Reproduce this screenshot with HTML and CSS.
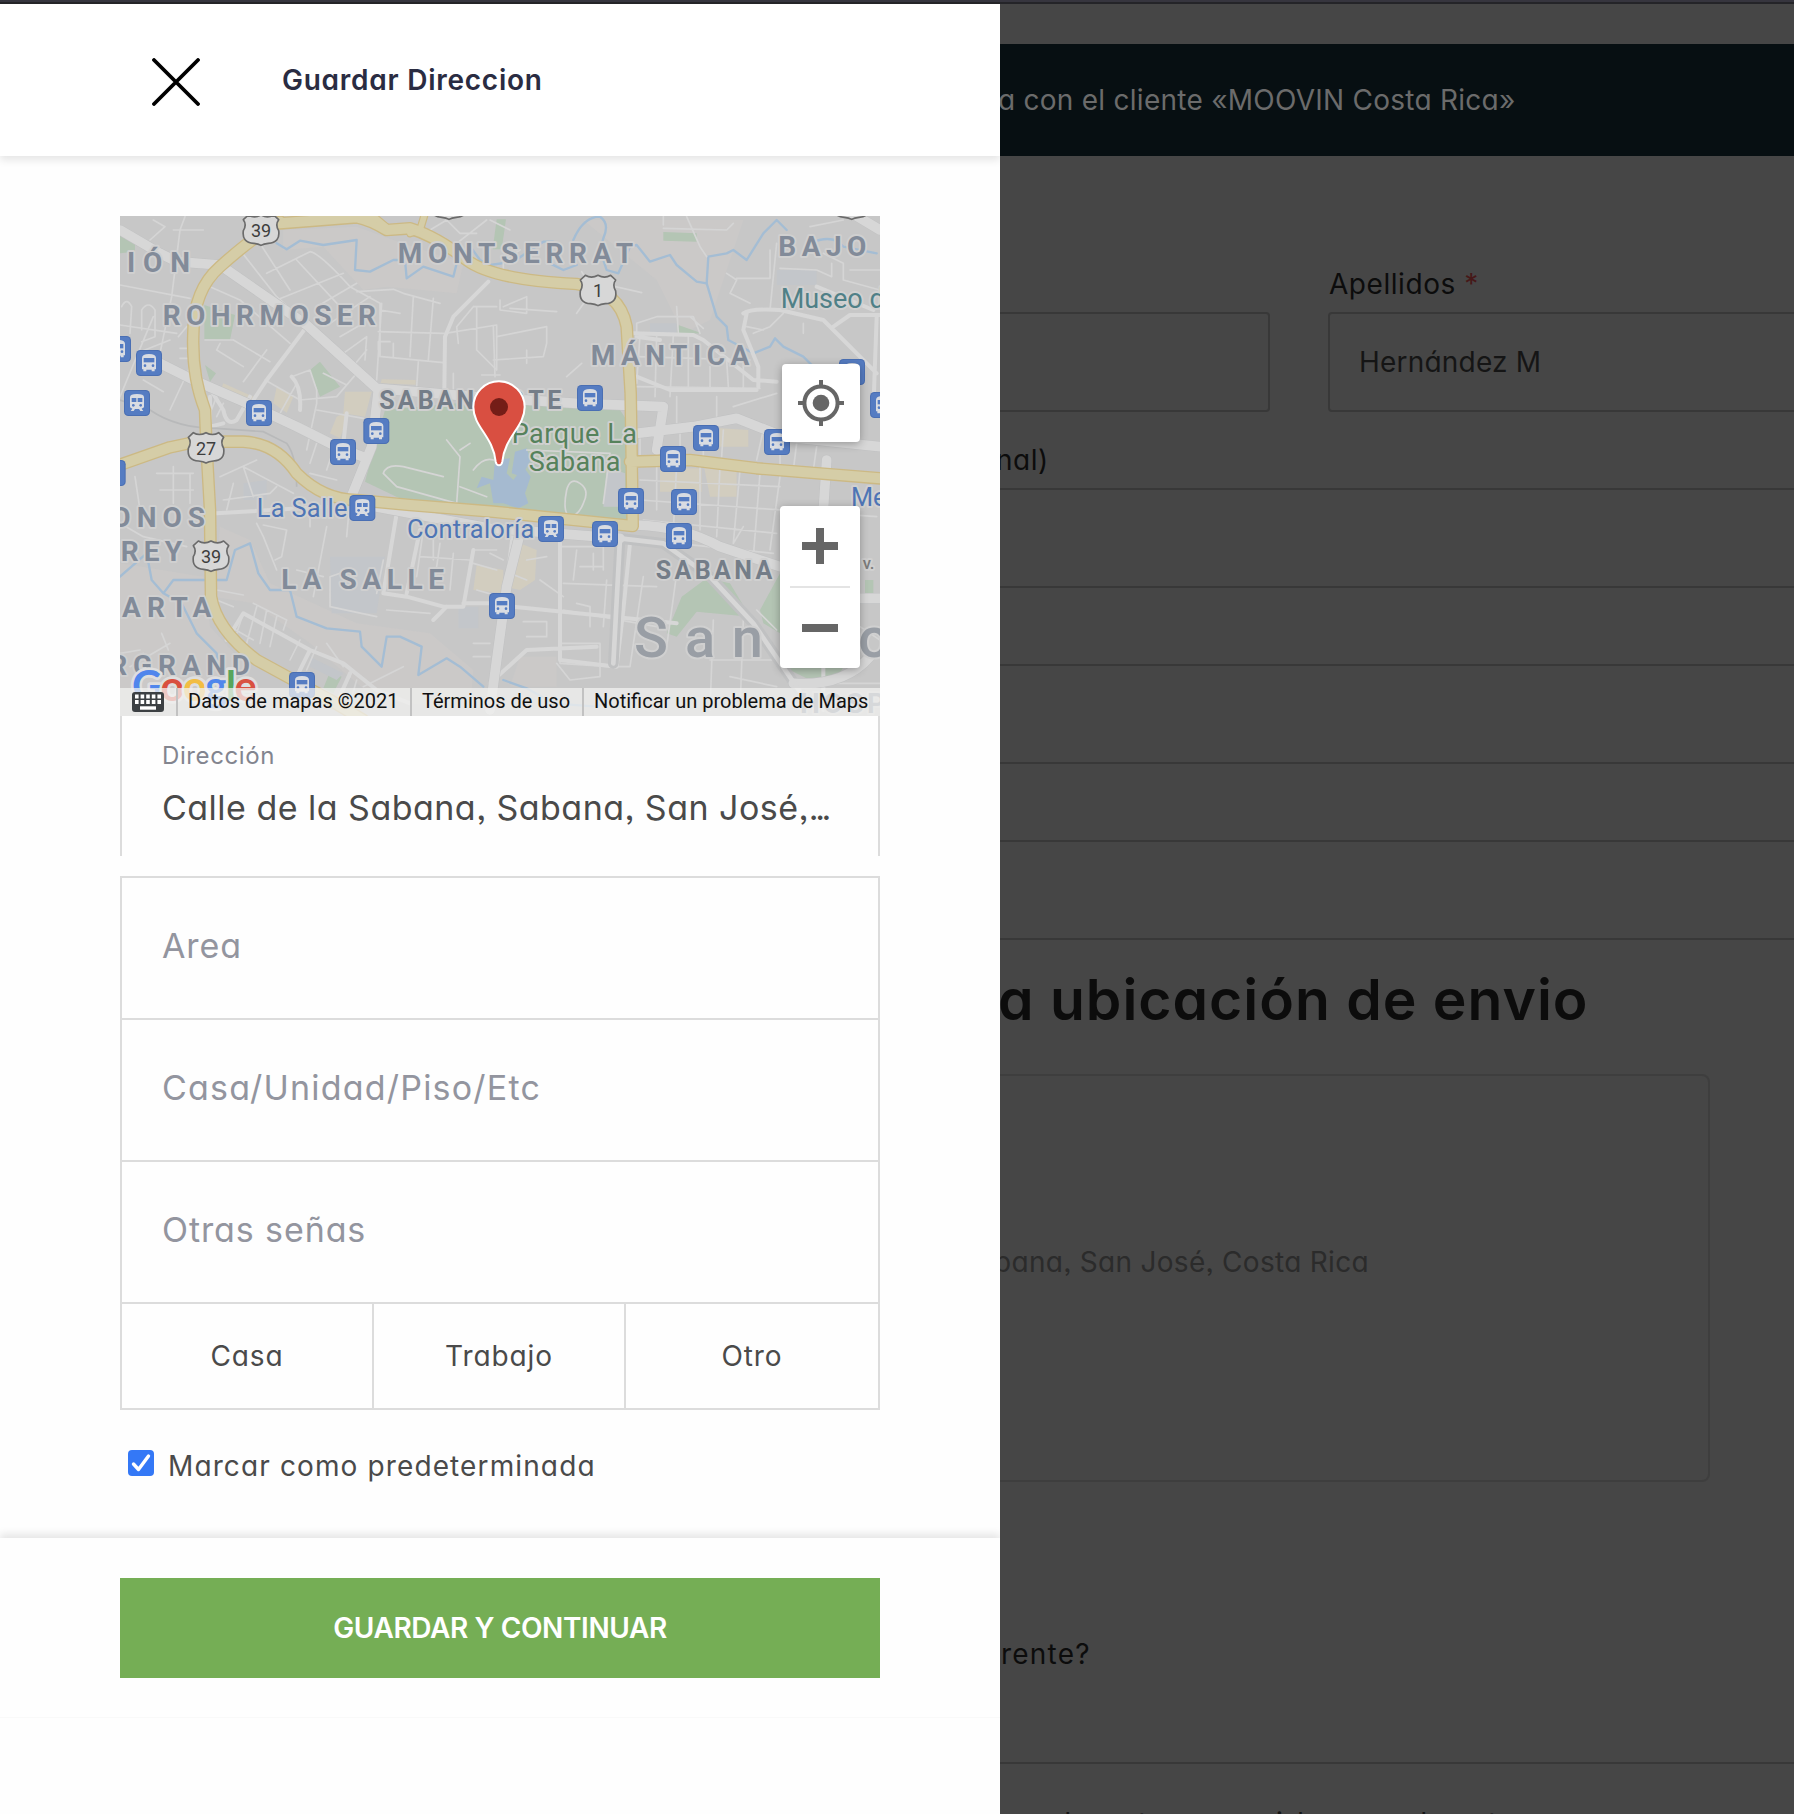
FILE: index.html
```html
<!DOCTYPE html>
<html lang="es">
<head>
<meta charset="utf-8">
<title>Guardar Direccion</title>
<link rel="stylesheet" href="styles.css">
</head>
<body>
<div class="topline"></div>
<div class="shell">
<aside class="drawer">
  <header class="head">
    <svg class="close" viewBox="0 0 48 48"><path d="M2 2L46 46M46 2L2 46" stroke="#000" stroke-width="3.8" stroke-linecap="round"/></svg>
    <h1 class="title">Guardar Direccion</h1>
  </header>
  <div class="body">
    <div class="map">
      <svg class="canvas" viewBox="30 18 2280 1500">
        <defs>
          <g id="bus"><rect width="78" height="78" rx="13" fill="#4a6fb3"/><rect x="3" y="3" width="72" height="72" rx="11" fill="#557cc2"/><path fill="#d9dce2" d="M18 24q0-12 21-12t21 12v34h-4v6h-9v-5H31v5h-9v-6h-4z"/><path fill="#557cc2" d="M23 24h32v13H23z"/><circle cx="27" cy="47" r="4" fill="#557cc2"/><circle cx="51" cy="47" r="4" fill="#557cc2"/></g>
          <g id="train"><rect width="78" height="78" rx="13" fill="#4a6fb3"/><rect x="3" y="3" width="72" height="72" rx="11" fill="#557cc2"/><path fill="#d9dce2" d="M18 22q0-10 21-10t21 10v30l-7 4 5 7h-9l-4-6H33l-4 6h-9l5-7-7-4z"/><path fill="#557cc2" d="M23 24h14v12H23zM41 24h14v12H41z"/><circle cx="28" cy="46" r="4" fill="#557cc2"/><circle cx="50" cy="46" r="4" fill="#557cc2"/></g>
          <path id="shield" d="M-38 -45Q-20 -34 0 -45Q20 -34 38 -45L53 -31Q42 -16 53 2Q58 38 22 40Q8 41 0 46Q-8 41 -22 40Q-58 38 -53 2Q-42 -16 -53 -31Z" fill="#d7d7d7" stroke="#6b6b6b" stroke-width="5" stroke-linejoin="round"/>
        </defs>
        <rect x="30" y="18" width="2280" height="1500" fill="#c7c7c7"/>
        <path fill="#cbc9c8" d="M520 60L740 50 850 90 1060 160 1040 250 830 230 760 240 640 110 520 120ZM1420 30H1900L1800 330 1720 370 1640 210ZM330 950L420 990 480 1120 740 1240 960 1270 1090 1380 1080 1500 800 1470 600 1300 430 1180 310 1160ZM30 1060L280 1100 300 1250 420 1380 400 1500H30ZM1230 1340H1340V1430H1200Z"/>
        <g fill="#b4c5b4">
          <path d="M825 600L1090 575 1380 590 1530 600 1550 630 1560 945 1140 905 900 880 765 815 785 740Z"/>
          <path d="M30 62L75 92V125L30 130ZM283 285L375 315 360 390 283 388ZM600 480L630 455 690 530 630 560ZM285 465L318 490 300 515ZM1160 28H1188L1175 118H1148ZM1660 66L1760 70V95L1660 92ZM1705 345L1775 370 1700 372ZM1715 1160L1790 1105 1860 1120 1920 1220 1760 1205 1700 1280 1670 1270ZM1950 1200L2010 1090V1270L1960 1240ZM660 1385L695 1400 670 1450 640 1435ZM2265 1110H2290V1150H2265ZM2020 1370H2200L2180 1410 2100 1410Z"/>
        </g>
        <g fill="#d2cdbf">
          <path d="M340 520L430 560 425 575 335 532ZM815 508L917 510V524L812 520ZM500 530L550 560 530 608 490 580ZM705 545H785L765 620 700 610ZM680 620L720 600 690 685 660 670ZM1230 1000L1280 1020 1275 1110 1230 1140 1180 1130ZM1650 775H1775V845H1650ZM1780 760H1880V860H1800ZM1830 655L1915 660V710H1830ZM1100 1065L1180 1080V1150L1090 1140Z"/>
        </g>
        <path fill="#c3c6ca" d="M660 1040H825L800 1210H665ZM1620 340H1700V370H1620ZM2000 180H2120V225H2000ZM400 820L470 810V870H400ZM1045 1190H1105V1255H1045ZM600 1340L700 1390 680 1410 600 1370ZM1490 770L1545 790V890L1480 890Z"/>
        <path fill="#a5bad0" d="M1155 750L1200 745 1190 790 1210 810 1240 770 1262 800 1245 850 1255 880 1225 895 1180 880 1150 880 1140 820 1100 835 1115 800 1150 810ZM1215 725L1250 715 1262 750 1235 800 1205 790Z"/>
        <g class="river">
          <path d="M500 100L530 118 570 92 640 105 740 90 735 180 780 185 850 150 885 150 890 205 940 170 1030 200 1040 160M1085 115L1110 150 1140 165 1210 155 1240 135 1300 95 1330 95 1320 160 1360 180 1400 165M1390 90Q1420 20 1470 20 1500 40 1480 85L1470 120 1490 180 1525 190 1560 110 1580 105 1620 155 1680 135 1700 165 1760 215 1790 220 1795 140 1850 130 1870 120 1910 150 1960 70 2000 30 2030 60"/>
          <path d="M1790 220L1820 320 1850 350 1855 390 1930 430 1980 410 1995 385 2020 410 2080 440 2110 470M2100 100Q2170 70 2200 110L2300 130"/>
          <path d="M30 1100L110 1030 125 1110 160 1150 190 1110 350 1110 375 1020 420 1000 445 1090 480 1140 540 1140 560 1220 650 1255 750 1265 755 1310 815 1370 830 1280 870 1280 935 1310 925 1395 1010 1345 1050 1370 1120 1430M160 1150L215 1180 260 1270 320 1330 330 1400M1180 1410L1250 1435 1330 1480 1460 1490 1500 1470"/>
        </g>
        <g class="lane">
          <path d="M225 20L210 60 185 260 150 430M30 225L240 265M30 345L200 370M130 30L165 50 120 90M95 360V300Q115 270 135 300V380L95 395M35 290Q50 260 65 290L60 370M280 60L190 60M205 380L230 350M30 560L130 320M180 600L250 450M100 510L160 545M80 430L180 390M210 415H240M210 445H240"/>
          <path d="M300 230L390 270 540 400M285 390L370 390 480 455M390 120L500 260 590 340M450 100L540 240M470 190L600 125Q630 130 720 230L810 280V440M560 150L690 290M500 270L700 190M620 290L740 220M660 340L780 260M400 515L470 420M330 400L320 420 400 470M690 380L760 340M700 430L770 380 765 450M720 480L770 420M740 245L850 238 880 250 990 280M910 260L900 440M970 265L955 450M815 280L800 510M805 365L1000 370M810 300L870 310M805 420V395H840M850 400V440M815 440L1000 458M925 455L920 530M1030 490V560M1005 370L1160 345M1090 290L1040 350 1045 400M1090 290H1160M1100 290V420L1160 480V345M1115 495H1170M510 610L560 520M465 510L570 570 680 560 740 490M545 500L600 480 620 540 620 580 590 720M620 600L760 625M300 610L320 560M340 580L320 620M640 490L710 525"/>
          <path d="M960 60L1010 30 1050 70 1100 70M1140 30L1200 60M1040 100L1130 30M1180 200V150L1230 120M1415 185L1430 210 1595 248M1460 225L1400 310M1180 290L1250 260V310L1170 300V270M1200 295L1340 305M1310 350V400L1300 440 1150 450M1415 460L1370 500M1160 380L1310 350M1250 420V460M1150 350L1155 500M1730 20L1770 110 1790 140M1660 45V20M1660 55L1850 60 1870 40M1850 190L1880 210 1860 250 1920 280M1880 205H1980V120M2010 175L2120 180 2165 200V160M2100 50L2200 30M2220 180H2310M2140 130L2200 160V210L2310 240M2080 370V340M1910 350L1960 360M1930 370L1980 350 2020 310M1580 370V340L1640 320 1750 320 1770 370M1700 290L1705 370M1740 320L1780 355"/>
          <path d="M1640 375L1635 560M1690 375L1680 560M1735 375V530M1590 375L1580 520M1800 470V530M1850 450L1855 530M1900 440V540M1580 440L1920 450M1580 530L1950 535M1700 560V650M1820 560V650M1870 590L2000 550M2000 100L1980 300M1710 640V750M1780 640V740M1590 680V740M1840 660L1835 740M1960 660L1940 750M2010 710V780M2060 700L2050 780M2120 710L2110 780"/>
          <path d="M1640 760V900M1700 765L1690 960M1770 770V960M1830 770L1820 980M1890 780L1870 1000M1950 790L1930 1040M2010 800L1980 1020M1590 810L2010 830M1590 870L2300 920M1600 930L2000 970M1700 1000L1990 1030M1870 1000L1900 950"/>
          <path d="M1350 980L1350 1360M1350 1010H1480V1080M1450 1030V1080M1410 1070H1480M1400 1020L1390 1110M1360 1120L1640 1130M1360 1200L1640 1250M1490 1110L1480 1250M1700 1090L1670 1310M1350 1300H1470V1400L1380 1410 1340 1360M1350 1360L1500 1370 1560 1370 1600 1100M1240 1235H1310V1280L1250 1280M1400 1180L1440 1190V1250M1250 1050L1310 1040M1200 1090L1250 1110M1290 1110L1360 1160M1140 1030L1180 1050M1810 1230L1800 1500M1900 1230L1890 1500M1800 1350H2000M1860 1400L2000 1430M1940 1200L2000 1260"/>
          <path d="M440 940L460 980 500 1080M460 945L530 960 515 1040 495 1050M650 950L610 1160M720 870L710 980M600 950V900M560 1080L640 1100M660 1190V1100L690 1090M660 1190L800 1220M800 1150L820 1050M75 800L90 900M190 770V880M240 790V880M140 790H250M150 840H250M330 800L440 750M350 900L370 820M430 860L400 770 550 850M340 870L480 850 500 830M320 1140L400 1155M320 1170L370 1190M440 1190L410 1300M360 1250L430 1290M430 1180L530 1230 520 1260M470 1200L450 1300M500 1220L480 1310M370 1300L400 1210M570 1290L540 1350M620 1310L590 1380M650 1300L700 1370M720 1400L690 1450M760 1430L880 1370M830 1200L960 1210M990 1000L970 1140M1030 1030L1020 1140M940 960L920 1100M1080 1050L930 1040M970 980V1050M1090 1020H1160M1090 1060L1160 1080M1100 1140L1170 1160M1090 1300H1140M1090 1340H1140M600 760L620 700M650 780L670 720M600 790L680 810M100 1330L120 1400M155 1270L175 1320M60 1370L180 1300M30 1330L90 1320M2250 1250L2310 1290M2160 1420H2310M2000 1480L2310 1490"/>
          <path d="M1370 840Q1380 800 1410 820Q1440 840 1420 880Q1400 930 1370 910Q1360 890 1370 840M820 790Q830 760 880 770L1000 800M820 790L860 830 1040 880 1050 740 1010 690M1050 720L1080 700M1050 830L1130 860M1090 780Q1120 740 1150 750M1250 720L1500 730 1480 880M740 1410L720 1480M100 980L230 1010M30 940L100 980"/>
        </g>
        <g class="street">
          <path d="M1135 215L1030 320 1005 380 1003 540M590 350L470 510 430 570M290 520L340 600Q350 650 380 630L420 560M340 640L300 650 300 560M545 500Q575 530 570 600M710 610L700 700M320 910L650 890M740 890L860 910 820 1150M930 960L890 1150M820 1150L890 1160 1000 1190 1060 1190 1090 1020M1060 1180L1150 1180M350 1290L400 1210 600 1320 700 1360 800 1440 900 1480M600 1320L550 1420M720 1390L680 1480M970 1230L1010 1190M1210 960L1185 1160M1210 1190L1700 1240M1140 1420L1250 1320 1460 1310M1350 980L1350 1350 1520 1370M1560 1000L1540 1200 1520 1370"/>
          <path d="M1570 370L1750 375 1780 390 1930 510 2000 515M1900 310Q1920 295 2010 300L2140 330 2300 490M1910 310L1900 360 1945 470 1945 530M2170 350L2220 315H2310M2140 1060L2140 1500M1580 380L1650 390M2300 320L2290 600M1580 500L1680 540 1940 540M2120 230L2290 300"/>
        </g>
        <g class="avenue-edge"><path d="M30 60L150 130 200 155 330 165 590 345 800 535 1090 560 1400 580 1660 590M150 460L250 510 400 575 560 650 680 710 770 745M805 540L785 710 720 870M740 880L1140 955 1530 985 1660 1000 1800 1100 1930 1240 2080 1460M1580 945Q1720 950 1830 1010L2010 1070M1530 985L1510 1360M1230 970L1190 1130 1160 1350 1140 1500M1660 590L1640 720M1580 670L1750 650 1880 625 2020 680 2310 710M2150 750L2140 900M2050 1420Q2200 1430 2280 1340M2250 1165H2310M2240 18L2310 60"/></g>
        <g class="avenue"><path d="M30 60L150 130 200 155 330 165 590 345 800 535 1090 560 1400 580 1660 590M150 460L250 510 400 575 560 650 680 710 770 745M805 540L785 710 720 870M740 880L1140 955 1530 985M1580 945Q1720 950 1830 1010L2010 1070M1230 970L1190 1130 1160 1350 1140 1500M1660 590L1640 720M1580 670L1750 650 1880 625 2020 680 2310 710M2150 750L2140 900M2050 1420Q2200 1430 2280 1340M2250 1165H2310M2240 18L2310 60"/><path class="slim" d="M1530 985L1660 1000 1800 1100 1930 1240 2080 1460M1530 985L1510 1360"/></g>
        <path d="M30 570L120 600Q200 655 320 655L460 665 530 700Q560 740 560 830" fill="none" stroke="#b8b9ba" stroke-width="5"/>
        <g class="hwy-edge">
          <path d="M510 40L740 22Q780 30 830 60L900 55Q980 80 1070 150Q1150 210 1400 222Q1530 240 1550 350L1562 550 1568 945M510 35Q430 80 330 170Q250 240 250 370Q245 500 285 600L290 720 300 900 303 1160Q320 1260 440 1350L660 1470 760 1530M20 768L180 712 260 695 400 695Q500 700 560 790Q640 870 740 870L900 885 1150 905 1568 948M1560 755L1740 750 1940 775 2310 805"/>
          <path class="ramp" d="M780 10L840 60M945 10L930 60 900 70"/>
        </g>
        <g class="hwy">
          <path d="M510 40L740 22Q780 30 830 60L900 55Q980 80 1070 150Q1150 210 1400 222Q1530 240 1550 350L1562 550 1568 945M510 35Q430 80 330 170Q250 240 250 370Q245 500 285 600L290 720 300 900 303 1160Q320 1260 440 1350L660 1470 760 1530M20 768L180 712 260 695 400 695Q500 700 560 790Q640 870 740 870L900 885 1150 905 1568 948M1560 755L1740 750 1940 775 2310 805"/>
          <path class="ramp" d="M780 10L840 60M945 10L930 60 900 70"/>
        </g>
        <g class="hood">
          <text x="-28" y="185" textLength="268">CIÓN</text>
          <text x="158" y="345" textLength="640">ROHRMOSER</text>
          <text x="863" y="158" textLength="706">MONTSERRAT</text>
          <text x="2005" y="137" textLength="264">BAJO</text>
          <text x="1442" y="464" textLength="476">MÁNTICA</text>
          <text x="4" y="950" textLength="281">ONOS</text>
          <text x="32" y="1052" textLength="184">REY</text>
          <text x="514" y="1136" textLength="488">LA SALLE</text>
          <text x="36" y="1220" textLength="268">ARTA</text>
          <text x="-2" y="1395" textLength="422">RGRAND</text>
          <text x="2070" y="1510" textLength="290">HOSPI</text>
        </g>
        <g class="hood dark">
          <text x="1150" y="597" textLength="90">ES</text>
          <text x="808" y="597" textLength="345">SABANA</text>
          <text x="1255" y="597" textLength="99">TE</text>
          <text x="1637" y="1106" textLength="350">SABANA</text>
        </g>
        <text class="city" x="1572" y="1340">S</text><text class="city" x="1725" y="1340">a</text><text class="city" x="1865" y="1340">n</text><text class="city" x="2245" y="1340">o</text>
        <text class="poi museum" x="2012" y="295">Museo de</text>
        <text class="poi park" x="1205" y="700" textLength="376">Parque La</text>
        <text class="poi park" x="1256" y="783" textLength="275">Sabana</text>
        <text class="poi stop" x="440" y="921" textLength="272">La Salle</text>
        <text class="poi stop" x="891" y="984" textLength="382">Contraloría</text>
        <text class="poi stop" x="2223" y="887">Merc</text>
        <text class="minor" x="2258" y="1078">v.</text>
        <use href="#bus" x="-15" y="378"/><use href="#bus" x="78" y="420"/><use href="#train" x="42" y="540"/><use href="#bus" x="408" y="570"/><use href="#bus" x="760" y="624"/><use href="#bus" x="660" y="687"/><use href="#bus" x="-31" y="750"/>
        <use href="#bus" x="1401" y="525"/><use href="#bus" x="2187" y="447"/><use href="#bus" x="2280" y="546"/><use href="#bus" x="1749" y="645"/><use href="#bus" x="1962" y="657"/><use href="#bus" x="1650" y="708"/>
        <use href="#train" x="718" y="855"/><use href="#bus" x="1137" y="1149"/><use href="#bus" x="537" y="1386"/><use href="#bus" x="1524" y="834"/><use href="#bus" x="1683" y="837"/><use href="#train" x="1284" y="918"/><use href="#bus" x="1446" y="933"/><use href="#bus" x="1668" y="939"/>
        <use href="#shield" x="453" y="60"/><use href="#shield" x="288" y="713"/><use href="#shield" x="303" y="1038"/><use href="#shield" x="1464" y="241"/><use href="#shield" x="1017" y="-18"/><use href="#shield" x="2225" y="-18"/>
        <g class="route"><text x="453" y="81">39</text><text x="288" y="735">27</text><text x="303" y="1058">39</text><text x="1464" y="261">1</text></g>
        <path d="M1167 514A77 77 0 0 0 1090 591C1090 650 1150 680 1157 755Q1159 766 1167 766Q1175 766 1177 755C1184 680 1244 650 1244 591A77 77 0 0 0 1167 514Z" fill="#d94f41" stroke="#fff" stroke-width="6"/>
        <circle cx="1167" cy="591" r="27" fill="#741d17"/>
        <text class="brand" x="66" y="1473" textLength="374"><tspan fill="#5086ec">G</tspan><tspan fill="#d95040">o</tspan><tspan fill="#f2bd42">o</tspan><tspan fill="#5086ec">g</tspan><tspan fill="#58a55c">l</tspan><tspan fill="#d95040">e</tspan></text>
      </svg>
      <div class="locate"><svg viewBox="0 0 46 46"><g fill="none" stroke="#666" stroke-width="4"><circle cx="23" cy="23" r="16.6"/><path d="M23 0V8M23 38V46M0 23H8M38 23H46"/></g><circle cx="23" cy="23" r="8.3" fill="#666"/></svg></div>
      <div class="zoom"><div class="zoom-btn"><svg viewBox="0 0 36 36"><path d="M14 0h8v14h14v8H22v14h-8V22H0v-8h14z" fill="#666"/></svg></div><div class="zoom-line"></div><div class="zoom-btn"><svg viewBox="0 0 36 36"><path d="M0 14h36v8H0z" fill="#666"/></svg></div></div>
      <div class="legal">
        <div class="keys"><svg viewBox="0 0 32 20"><rect width="32" height="20" rx="3" fill="#3c4043"/><path d="M3 4.5H29M3 10H29" stroke="#fff" stroke-width="4" stroke-dasharray="3.6 2"/><path d="M8 16H24" stroke="#fff" stroke-width="3.4"/></svg></div>
        <span class="lg lg-data">Datos de mapas ©2021</span><span class="lg lg-terms">Términos de uso</span><span class="lg lg-report">Notificar un problema de Maps</span>
      </div>
    </div>
    <div class="address"><div class="label">Dirección</div><div class="value">Calle de la Sabana, Sabana, San José,<span class="dots">...</span></div></div>
    <div class="fields">
      <div class="field"><span class="t-area">Area</span></div>
      <div class="field"><span class="t-unit">Casa/Unidad/Piso/Etc</span></div>
      <div class="field"><span class="t-area">Otras señas</span></div>
      <div class="kinds"><div class="kind">Casa</div><div class="kind">Trabajo</div><div class="kind">Otro</div></div>
    </div>
    <div class="default"><svg class="check" viewBox="0 0 26 26"><rect width="26" height="26" rx="4" fill="#3478f6"/><path d="M5.5 14L10.5 19.5L20.5 6" fill="none" stroke="#fff" stroke-width="3.4" stroke-linecap="round" stroke-linejoin="round"/></svg><span class="t-default">Marcar como predeterminada</span></div>
  </div>
  <footer class="foot"><div class="save">GUARDAR Y CONTINUAR</div></footer>
</aside>
<main class="page">
  <div class="banner"><span>a con el cliente «MOOVIN Costa Rica»</span></div>
  <div class="names">
    <div class="first"><div class="plabel">&nbsp;</div><div class="pinput open-left"></div></div>
    <div class="last"><div class="plabel"><span>Apellidos</span> <span class="req">*</span></div><div class="pinput"><span class="t-hern">Hernández M</span></div></div>
  </div>
  <div class="company">nal)</div>
  <div class="row"></div><div class="row"></div><div class="row row-last"></div>
  <h2 class="where">a ubicación de envio</h2>
  <div class="place"><span>bana, San José, Costa Rica</span></div>
  <div class="other">rente?</div>
  <div class="rule"></div>
  <div class="note"><span>de</span><span>tu</span><span>id</span><span>de</span><span>tu</span></div>
</main>
</div>
</body>
</html>
```
FILE: styles.css
```css
* { box-sizing: border-box; }
body { margin: 0; width: 1794px; height: 1814px; overflow: hidden; background: #464646; font-family: Inter, "Open Sans", sans-serif; font-feature-settings: "cv11", "ss03"; font-size: 28px; line-height: 40px; color: #4a4a4a; }
svg { display: block; }
.topline { height: 4px; background: #36353e; border-bottom: 2px solid #242428; }
.shell { display: flex; height: 1810px; }
.drawer { width: 1000px; background: #fefefe; display: flex; flex-direction: column; }
.head { height: 152px; flex: none; display: flex; align-items: center; padding: 0 0 0 152px; background: #fff; box-shadow: 0 4px 8px rgba(0,0,0,.1); clip-path: inset(0 0 -20px 0); }
.close { width: 48px; height: 48px; margin-top: 4px; }
.title { margin: 0 0 0 82px; font-size: 28px; font-weight: 600; color: #2a2c42; letter-spacing: .75px; white-space: nowrap; }
.body { padding: 60px 120px 0; height: 1382px; flex: none; }
.map { position: relative; height: 500px; overflow: hidden; }
.canvas { width: 760px; height: 500px; font-family: Roboto, sans-serif; font-feature-settings: normal; }
.river, .lane, .street, .avenue, .avenue-edge, .hwy, .hwy-edge { fill: none; stroke-linejoin: round; stroke-linecap: round; }
.river { stroke: #a4bdd4; stroke-width: 7; }
.lane { stroke: #d5d5d5; stroke-width: 5; }
.street { stroke: #d7d7d7; stroke-width: 12; }
.avenue { stroke: #d7d7d7; stroke-width: 29; }
.slim { stroke-width: 14; }
.avenue-edge { stroke: #c0c1c2; stroke-width: 32; }
.hwy { stroke: #d5cda7; stroke-width: 30; }
.hwy-edge { stroke: #ccb984; stroke-width: 38; }
.hwy-edge .ramp { stroke-width: 24; }
.hwy .ramp { stroke-width: 17; }
.hood, .poi, .city, .minor { paint-order: stroke; stroke: #d0d0d0; stroke-width: 12px; stroke-linejoin: round; }
.hood { font-size: 84px; font-weight: 700; fill: #828b99; }
.dark { font-size: 75px; fill: #747d88; }
.poi { font-size: 81px; }
.museum { fill: #4f8087; }
.park { fill: #56825b; }
.stop { fill: #4e75b5; font-size: 76px; }
.city { font-size: 168px; font-weight: 500; fill: #999ea5; }
.minor { font-size: 50px; font-weight: 500; fill: #7c7c7c; }
.route { font-size: 54px; fill: #3d3d3d; text-anchor: middle; }
.brand { font-family: Lato, sans-serif; font-weight: 700; font-size: 124px; paint-order: stroke; stroke: #dedede; stroke-width: 16px; stroke-linejoin: round; }
.locate { position: absolute; left: 662px; top: 148px; width: 78px; height: 78px; background: #fff; border-radius: 4px; box-shadow: 0 2px 8px rgba(0,0,0,.3); display: grid; place-items: center; }
.locate svg { width: 46px; height: 46px; }
.zoom { position: absolute; left: 660px; top: 290px; width: 80px; height: 162px; background: #fff; border-radius: 4px; box-shadow: 0 2px 8px rgba(0,0,0,.3); display: flex; flex-direction: column; align-items: center; }
.zoom-btn { height: 80px; display: grid; place-items: center; }
.zoom-btn svg { width: 36px; height: 36px; }
.zoom-line { width: 60px; height: 2px; background: #e4e4e4; }
.legal { position: absolute; left: 0; right: 0; bottom: 0; height: 28px; display: flex; background: rgba(242,242,240,.75); font: 20px/26px Roboto, sans-serif; color: #111; }
.keys { width: 56px; padding: 4px 0 0 12px; }
.keys svg { width: 32px; height: 20px; }
.lg { border-left: 2px solid #c2c2c2; padding-left: 10px; white-space: nowrap; }
.lg-data { width: 234px; }
.lg-terms { width: 172px; }
.lg-report { flex: 1; }
.address { height: 140px; border: 2px solid #dcdcdc; border-width: 0 2px; padding: 20px 40px 0; white-space: nowrap; }
.label { font-size: 24px; color: #83858f; letter-spacing: .6px; }
.value { font-size: 34px; line-height: 48px; margin-top: 8px; letter-spacing: .48px; }
.dots { letter-spacing: -3.4px; }
.fields { margin-top: 20px; border: 2px solid #dcdcdc; }
.field { height: 142px; padding: 0 0 4px 40px; border-bottom: 2px solid #dcdcdc; display: flex; align-items: center; font-size: 34px; color: #93959f; }
.t-area { letter-spacing: .9px; }
.t-unit { letter-spacing: 1.2px; }
.kinds { display: grid; grid-template-columns: 250px 252px 1fr; height: 104px; letter-spacing: .9px; }
.kind { display: grid; place-items: center; border-left: 2px solid #dcdcdc; }
.kind:first-child { border-left: 0; }
.default { display: flex; margin: 36px 0 0 8px; height: 40px; }
.check { width: 26px; height: 26px; margin: 4px 14px 0 0; }
.t-default { letter-spacing: 1.12px; }
.foot { position: relative; height: 180px; padding: 40px 120px 0; background: #fefefe; border-bottom: 1px solid #f9f9f9; box-shadow: 0 -4px 8px rgba(0,0,0,.1); clip-path: inset(-20px 0 0 0); }
.save { height: 100px; display: grid; place-items: center; background: #75ae55; color: #fff; font-weight: 600; letter-spacing: -.4px; }
.page { width: 794px; height: 1810px; overflow: hidden; color: #0c0c0c; white-space: nowrap; }
.banner { margin-top: 40px; height: 112px; background: #070f12; color: #6b6b6b; padding-top: 36px; letter-spacing: .26px; }
.banner span { margin-left: -2px; }
.names { display: flex; gap: 58px; padding-top: 108px; height: 296px; }
.names .first { width: 270px; flex: none; }
.names .last { width: 600px; flex: none; }
.plabel { height: 48px; padding-left: 1px; letter-spacing: .55px; }
.req { color: #461818; }
.pinput { height: 100px; border: 2px solid #383838; border-radius: 4px; padding: 28px 0 0 29px; color: #151515; }
.t-hern { letter-spacing: .2px; }
.open-left { border-left: 0; border-radius: 0 4px 4px 0; }
.company { height: 36px; margin-left: -4px; line-height: 16px; letter-spacing: .5px; }
.row { height: 100px; border: 2px solid #383838; border-width: 2px 0; margin-bottom: 76px; }
.row-last { margin-bottom: 0; }
.where { margin: 22px 0 0 -2px; height: 112px; line-height: 76px; font-size: 57px; font-weight: 600; letter-spacing: 1px; }
.place { width: 710px; height: 408px; border: 2px solid #3e3e3e; border-left: 0; border-radius: 0 8px 8px 0; padding-top: 166px; color: #2b2b2b; letter-spacing: .3px; }
.place span { margin-left: -6px; }
.other { margin-top: 152px; height: 128px; padding-left: 1px; letter-spacing: 1.2px; }
.rule { height: 2px; background: #383838; }
.note { display: flex; margin: 39px 0 0 54px; color: #151515; }
.note span { width: 84px; flex: none; }
.note span:nth-child(2) { width: 138px; }
.note span:nth-child(3) { width: 134px; letter-spacing: 4px; }
.note span:nth-child(4) { width: 78px; }
```
